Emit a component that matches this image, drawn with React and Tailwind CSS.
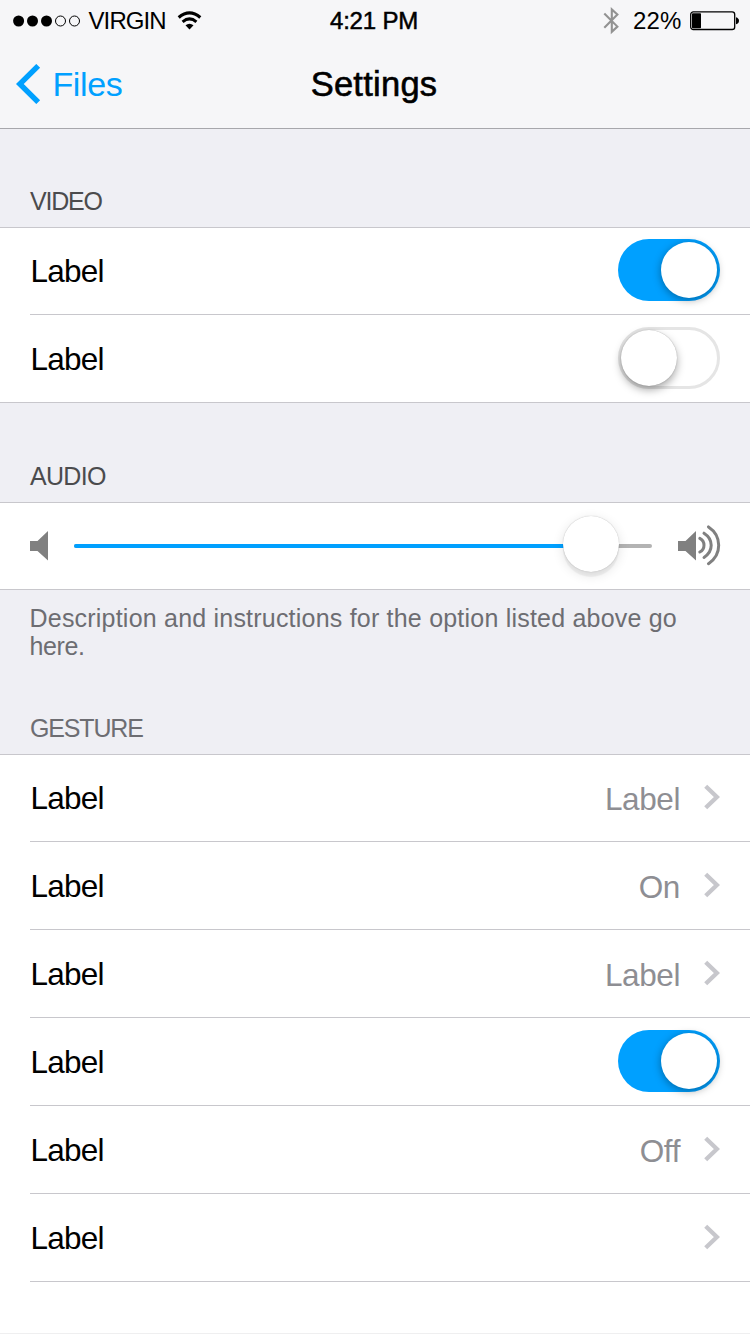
import React from "react";

function Toggle({ on }) {
  return (
    <div
      className={
        on
          ? "flex h-[62px] w-[102px] -translate-y-px justify-end rounded-full bg-[#00a0ff] p-[3px]"
          : "flex h-[62px] w-[102px] -translate-y-px justify-start rounded-full border-[3px] border-[#e5e5e5] bg-white"
      }
    >
      <div
        className={
          on
            ? "size-[56px] rounded-full bg-white shadow-[0_2px_9px_rgba(0,0,0,0.36)]"
            : "size-[56px] rounded-full bg-white shadow-[0_4px_9px_rgba(0,0,0,0.34),0_0_1px_rgba(0,0,0,0.35)]"
        }
      />
    </div>
  );
}

function Chevron() {
  return (
    <svg className="h-[26px] w-[16px] -translate-y-px" viewBox="0 0 16 26" fill="none">
      <path d="M1.7 2.2 L12.9 13 L1.7 23.8" stroke="#c7c7cc" strokeWidth="4.3" />
    </svg>
  );
}

function Row({ first, wide, children, value, chevron, toggle }) {
  return (
    <div className={first ? "flex h-[87px] items-end" : "flex h-[88px] items-end"}>
      <div
        className={
          wide
            ? "flex h-[87px] w-full items-center border-b border-[#c8c7cc] pr-[30px] pl-[30px]"
            : "ml-[30px] flex h-[87px] flex-1 items-center border-b border-[#c8c7cc] pr-[30px]"
        }
      >
        <span className="flex-1 pl-[0.5px] text-[31.5px] leading-[36px] tracking-[-0.75px] text-black">{children}</span>
        {value && (
          <span className="mr-[24px] translate-y-px text-[31.5px] leading-[36px] tracking-[-0.4px] text-[#8e8e93]">{value}</span>
        )}
        {chevron && <Chevron />}
        {toggle && <Toggle on={toggle === "on"} />}
      </div>
    </div>
  );
}

function Speaker({ loud }) {
  return (
    <svg
      className={loud ? "h-[42px] w-[44px]" : "h-[42px] w-[18px]"}
      viewBox={loud ? "0 0 44 42" : "0 0 18 42"}
      fill="none"
    >
      <path d="M0 16H7.5L18 6V35.5L7.5 26H0Z" fill="#808080" />
      {loud && (
        <g stroke="#808080" strokeWidth="3" strokeLinecap="round">
          <path d="M21.8 13.4Q26 15.6 26 20.2Q26 24.8 21.8 27" />
          <path d="M26 8.2Q33.2 12.8 33.2 20.3Q33.2 27.8 26 32.4" />
          <path d="M30.5 1.9Q40.7 8.6 40.7 20.3Q40.7 32 30.5 38.7" />
        </g>
      )}
    </svg>
  );
}

function StatusBar() {
  return (
    <div className="grid h-[41px] grid-cols-3 items-center text-[24px] leading-[28px] text-black">
      <div className="flex items-center pl-[13px]">
        <svg className="h-[12px] w-[68px]" viewBox="0 0 68 12">
          <circle cx="5.6" cy="6" r="5.5" />
          <circle cx="19.5" cy="6" r="5.5" />
          <circle cx="33.5" cy="6" r="5.5" />
          <circle cx="47.5" cy="6" r="5" fill="none" stroke="black" strokeWidth="1" />
          <circle cx="61.5" cy="6" r="5" fill="none" stroke="black" strokeWidth="1" />
        </svg>
        <span className="ml-[7.5px] w-[88px] tracking-[-0.9px]">VIRGIN</span>
        <svg className="h-[20px] w-[25px]" viewBox="0 0 25 20" fill="none">
          <path d="M1.7 6.5Q12.5 -2.7 23.3 6.5" stroke="black" strokeWidth="3.2" />
          <path d="M5.6 10.8Q12.5 5 19.4 10.8" stroke="black" strokeWidth="3" />
          <path d="M8.5 14.2Q12.5 11.2 16.5 14.2L12.5 18.5Z" fill="black" />
        </svg>
      </div>
      <div className="pr-[2px] text-center tracking-[-0.2px] [-webkit-text-stroke:0.5px_black]">
        4:21 PM
      </div>
      <div className="flex items-center justify-end pr-[11px]">
        <svg className="mr-[14px] h-[28px] w-[16px]" viewBox="0 0 16 28" fill="none">
          <path d="M1.3 6.4L14.4 19.6L8.8 24.8V2.4L14.4 7.6L1.3 20.8" stroke="#929292" strokeWidth="2.1" />
        </svg>
        <span className="w-[57px] tracking-[0.15px]">22%</span>
        <svg className="h-[20px] w-[49px]" viewBox="0 0 49 20">
          <rect x="0.7" y="0.9" width="44" height="17.6" rx="2.6" fill="none" stroke="black" strokeWidth="1.3" />
          <rect x="2" y="2.2" width="9" height="15" rx="0.8" />
          <path d="M46 6.2Q49 7.2 49 9.7Q49 12.2 46 13.2Z" />
        </svg>
      </div>
    </div>
  );
}

function NavBar() {
  return (
    <div className="grid h-[85px] grid-cols-3 items-center">
      <div className="flex items-center pl-[16px] text-[#00a0ff]">
        <svg className="h-[40px] w-[25px]" viewBox="0 0 25 40" fill="none">
          <path d="M22.2 1.9L3.8 20L22.2 38.1" stroke="#00a0ff" strokeWidth="5.5" />
        </svg>
        <span className="ml-[11.5px] text-[34px] leading-[40px] tracking-[-0.4px]">Files</span>
      </div>
      <h1 className="pr-[2px] text-center text-[34.5px] leading-[40px] tracking-[0.25px] text-black [-webkit-text-stroke:0.6px_black]">
        Settings
      </h1>
    </div>
  );
}

export default function App() {
  return (
    <div className="flex h-[1334px] w-[750px] flex-col overflow-hidden bg-[#efeff4] font-['Liberation_Sans',Arial,sans-serif]">
      <header className="h-[129px] border-b border-[#a7a7ac] bg-[#f6f6f8]">
        <StatusBar />
        <NavBar />
      </header>

      <h2 className="flex h-[98px] items-end pb-[12px] pl-[30px] text-[25px] leading-[28px] tracking-[-1.2px] text-[#4b4b4d]">VIDEO</h2>
      <section className="border-t border-[#c8c7cc] bg-white">
        <Row first toggle="on">Label</Row>
        <Row wide toggle="off">Label</Row>
      </section>

      <h2 className="flex h-[99px] items-end pb-[12px] pl-[30px] text-[25px] leading-[28px] tracking-[-0.7px] text-[#4b4b4d]">AUDIO</h2>
      <section className="flex h-[88px] items-center border-y border-[#c8c7cc] bg-white pr-[28px] pl-[30px]">
        <Speaker />
        <div className="mr-[26px] ml-[26px] flex h-[4px] w-[578px] items-center rounded-full bg-[#b3b3b3]">
          <div className="flex h-[4px] w-[545px] items-center justify-end rounded-l-full bg-[linear-gradient(to_right,#00a0ff_500px,#b3b3b3_500px)]">
            <div className="size-[56px] shrink-0 -translate-y-[2px] rounded-full bg-white shadow-[0_0_1px_rgba(0,0,0,0.3),0_5px_1px_rgba(0,0,0,0.05),0_3px_12px_rgba(0,0,0,0.12)]" />
          </div>
        </div>
        <Speaker loud />
      </section>

      <p className="h-[96px] pt-[14px] pr-[40px] pl-[29.5px] text-[25px] leading-[28px] tracking-[0.21px] text-[#6d6d72]">
        Description and instructions for the option listed above go<br />
        <span className="tracking-[-0.4px]">here.</span>
      </p>
      <h2 className="flex h-[68px] items-end pb-[12px] pl-[30px] text-[25px] leading-[28px] tracking-[-1.15px] text-[#6d6d72]">GESTURE</h2>
      <section className="h-[580px] border-t border-b border-t-[#c8c7cc] border-b-[#efeff0] bg-white">
        <Row first value="Label" chevron>Label</Row>
        <Row value="On" chevron>Label</Row>
        <Row value="Label" chevron>Label</Row>
        <Row toggle="on">Label</Row>
        <Row value="Off" chevron>Label</Row>
        <Row chevron>Label</Row>
      </section>
    </div>
  );
}
